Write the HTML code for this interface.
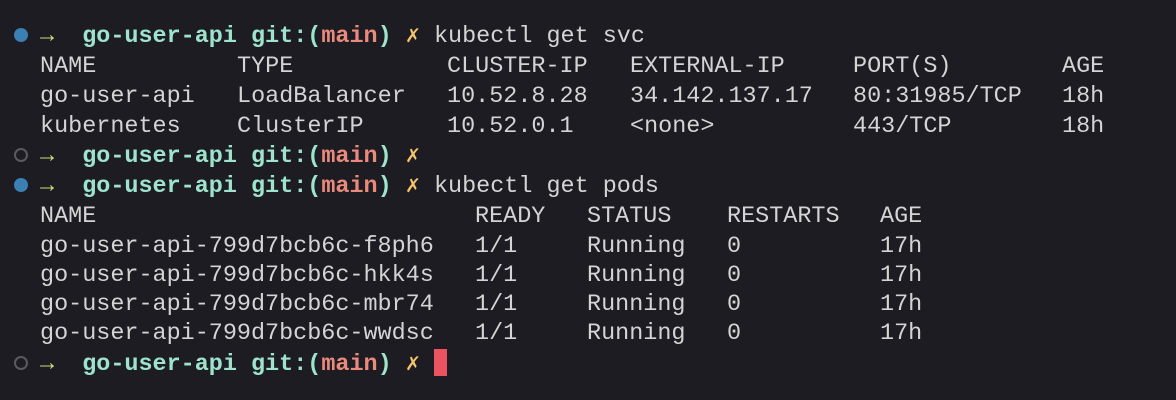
<!DOCTYPE html>
<html><head><meta charset="utf-8"><style>
html,body{margin:0;padding:0;background:#1c1c22;width:1176px;height:400px;overflow:hidden}
.l{position:absolute;left:40px;height:30px;line-height:30px;font-family:"Liberation Mono",monospace;font-size:23.45px;color:#d4d4d4;white-space:pre}
.l i{font-style:normal;position:absolute;top:0}
.b{font-weight:bold}
.t{color:#9ee3cb}.r{color:#ea8a7c}.y{color:#f3c46b;font-weight:normal}.g{color:#c9e07c;font-weight:bold}
.dot{position:absolute;left:14px;width:14px;height:14px;border-radius:50%;box-sizing:border-box}
.cur{display:inline-block;width:13px;height:27px;background:#ec5360;vertical-align:middle;margin-top:-3px}
</style></head><body>
<div class="dot" style="top:28px;background:#3b80b2"></div>
<div class="l" style="top:22px"><span class="g">→</span>  <span class="b t">go-user-api git:(</span><span class="b r">main</span><span class="b t">)</span> <span class="y">✗</span> kubectl get svc</div>
<div class="l" style="top:52px">NAME<i style="left:197px">TYPE</i><i style="left:407px">CLUSTER-IP</i><i style="left:590px">EXTERNAL-IP</i><i style="left:813px">PORT(S)</i><i style="left:1022px">AGE</i></div>
<div class="l" style="top:82px">go-user-api<i style="left:197px">LoadBalancer</i><i style="left:407px">10.52.8.28</i><i style="left:590px">34.142.137.17</i><i style="left:813px">80:31985/TCP</i><i style="left:1022px">18h</i></div>
<div class="l" style="top:112px">kubernetes<i style="left:197px">ClusterIP</i><i style="left:407px">10.52.0.1</i><i style="left:590px">&lt;none&gt;</i><i style="left:813px">443/TCP</i><i style="left:1022px">18h</i></div>
<div class="dot" style="top:148px;border:2px solid #5a5a60"></div>
<div class="l" style="top:142px"><span class="g">→</span>  <span class="b t">go-user-api git:(</span><span class="b r">main</span><span class="b t">)</span> <span class="y">✗</span></div>
<div class="dot" style="top:178px;background:#3b80b2"></div>
<div class="l" style="top:172px"><span class="g">→</span>  <span class="b t">go-user-api git:(</span><span class="b r">main</span><span class="b t">)</span> <span class="y">✗</span> kubectl get pods</div>
<div class="l" style="top:202px">NAME<i style="left:435px">READY</i><i style="left:547px">STATUS</i><i style="left:687px">RESTARTS</i><i style="left:840px">AGE</i></div>
<div class="l" style="top:232px">go-user-api-799d7bcb6c-f8ph6<i style="left:435px">1/1</i><i style="left:547px">Running</i><i style="left:687px">0</i><i style="left:840px">17h</i></div>
<div class="l" style="top:261px">go-user-api-799d7bcb6c-hkk4s<i style="left:435px">1/1</i><i style="left:547px">Running</i><i style="left:687px">0</i><i style="left:840px">17h</i></div>
<div class="l" style="top:290px">go-user-api-799d7bcb6c-mbr74<i style="left:435px">1/1</i><i style="left:547px">Running</i><i style="left:687px">0</i><i style="left:840px">17h</i></div>
<div class="l" style="top:319px">go-user-api-799d7bcb6c-wwdsc<i style="left:435px">1/1</i><i style="left:547px">Running</i><i style="left:687px">0</i><i style="left:840px">17h</i></div>
<div class="dot" style="top:356px;border:2px solid #5a5a60"></div>
<div class="l" style="top:350px"><span class="g">→</span>  <span class="b t">go-user-api git:(</span><span class="b r">main</span><span class="b t">)</span> <span class="y">✗</span> <span class="cur"></span></div>
</body></html>
